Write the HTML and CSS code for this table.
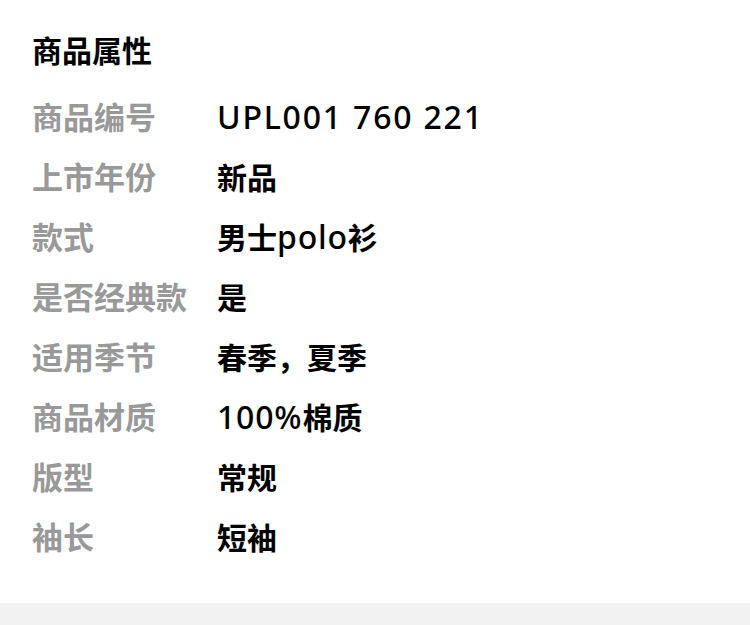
FILE: index.html
```html
<!DOCTYPE html>
<html lang="zh-CN">
<head>
<meta charset="utf-8">
<link rel="stylesheet" href="styles.css">
</head>
<body>
<section class="attrs">
  <h2 class="attrs-title">商品属性</h2>
  <dl class="attrs-list">
    <dt>商品编号</dt><dd><span class="latin wide">UPL001 760 221</span></dd>
    <dt>上市年份</dt><dd>新品</dd>
    <dt>款式</dt><dd>男士<span class="latin">polo</span>衫</dd>
    <dt>是否经典款</dt><dd>是</dd>
    <dt>适用季节</dt><dd>春季，夏季</dd>
    <dt>商品材质</dt><dd><span class="latin">100%</span>棉质</dd>
    <dt>版型</dt><dd>常规</dd>
    <dt>袖长</dt><dd>短袖</dd>
  </dl>
</section>
<div class="divider"></div>
</body>
</html>
```
FILE: styles.css
```css
html, body {
  margin: 0;
  padding: 0;
  background: #ffffff;
}
body {
  font-family: "Noto Sans CJK SC", "Noto Sans", sans-serif;
  color: #000;
}
.attrs {
  padding: 19px 0 37px 32px;
}
.attrs-title {
  margin: 0 0 7px;
  font-size: 30px;
  line-height: 60px;
  font-weight: 700;
}
.attrs-list {
  margin: 0;
  display: grid;
  grid-template-columns: 185px 1fr;
  grid-auto-rows: 60px;
  font-size: 30px;
  line-height: 60px;
}
.attrs-list dt {
  color: #999999;
  font-size: 31px;
  font-weight: 700;
  white-space: nowrap;
  overflow: hidden;
}
.attrs-list dd {
  margin: 0;
  font-weight: 700;
  color: #000;
  white-space: nowrap;
  overflow: hidden;
}
.latin {
  font-family: "Noto Sans", "Open Sans", sans-serif;
  font-weight: 500;
  font-size: 32px;
  line-height: 1;
  letter-spacing: 0.8px;
}
.latin.wide {
  letter-spacing: 1.8px;
}
.divider {
  height: 40px;
  background: #f2f2f2;
}
```
